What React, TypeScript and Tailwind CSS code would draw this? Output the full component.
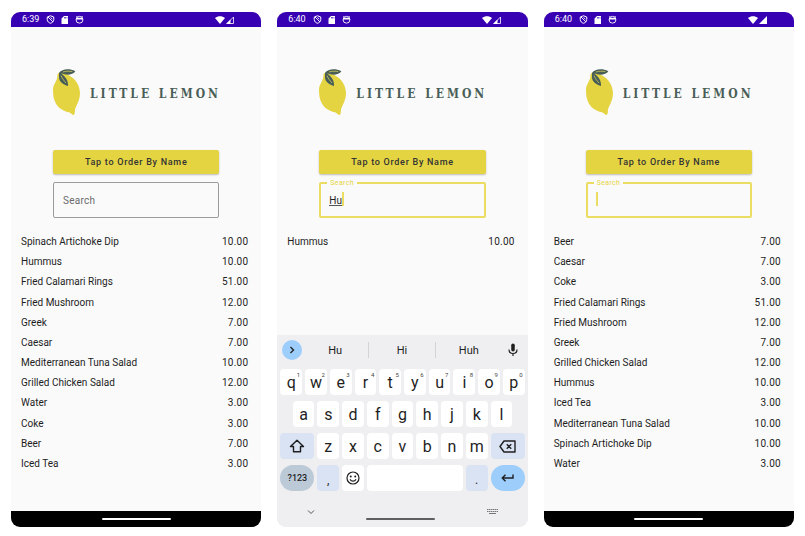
import { useId, type ReactNode } from "react";

type Dish = [name: string, price: string];

const MENU: Dish[] = [
  ["Spinach Artichoke Dip", "10.00"],
  ["Hummus", "10.00"],
  ["Fried Calamari Rings", "51.00"],
  ["Fried Mushroom", "12.00"],
  ["Greek", "7.00"],
  ["Caesar", "7.00"],
  ["Mediterranean Tuna Salad", "10.00"],
  ["Grilled Chicken Salad", "12.00"],
  ["Water", "3.00"],
  ["Coke", "3.00"],
  ["Beer", "7.00"],
  ["Iced Tea", "3.00"],
];

const SORTED = [...MENU].sort((a, b) => a[0].localeCompare(b[0]));

function StatusBar({ time, fullSignal }: { time: string; fullSignal?: boolean }) {
  return (
    <header className="flex h-[15px] shrink-0 items-center bg-[#3700b3] pr-[27px] pl-[11px] text-white">
      <span className="text-[9px] leading-[15px]">{time}</span>
      <svg className="ml-[7px] size-[9px]" viewBox="0 0 18 18" fill="none" stroke="currentColor" strokeWidth="2">
        <path d="M9 1.500 15.500 4v5c0 4-3 6.500-6.500 7.500C5.500 15.500 2.500 13 2.500 9V4z" />
        <path d="M4 4l10 10M9 4.500l3.500 4" strokeWidth="1.800" />
      </svg>
      <svg className="ml-[6px] size-[8px]" viewBox="0 0 16 16" fill="currentColor">
        <path fillRule="evenodd" d="M6 0h8v16H1V5zM6 2v3h1.300V2zm2.700 0v3H10V2zm2.600 0v3h1.300V2z" />
      </svg>
      <svg className="ml-[6px] size-[9px]" viewBox="0 0 18 18" fill="none" stroke="currentColor">
        <circle cx="9" cy="9.500" r="6.800" strokeWidth="1.800" />
        <path d="M2 5.500h14v3.500H2z" fill="currentColor" stroke="none" />
        <path d="M4.500 4 2.500 2M13.500 4l2-2" strokeWidth="1.500" />
      </svg>
      <svg className="ml-auto h-[8px] w-[10px]" viewBox="0 0 20 16" fill="currentColor">
        <path d="M10 16 0 4C6-1 14-1 20 4z" />
      </svg>
      <svg className="ml-px size-[8px]" viewBox="0 0 16 16" fill="currentColor">
        {fullSignal ? (
          <path d="M16 0v16H0z" />
        ) : (
          <>
            <path d="M15 2v13H2z" fill="none" stroke="currentColor" strokeWidth="1.600" />
            <path d="M9 7v9H0z" />
          </>
        )}
      </svg>
    </header>
  );
}

function Logo() {
  return (
    <div className="flex items-center gap-[10px]">
      <svg className="h-[46px] w-[27px] shrink-0" viewBox="0 0 81 138">
        <path
          d="M17 12C25 8 38 13 50 20C68 30 81 50 81 73C81 94 70 109 66 121C65 128 67 134 62 138C58 138 54 133 48 130C34 126 18 120 9 104C2 92 0 78 0 64C0 46 11 38 13 24C13 19 13 15 17 12Z"
          fill="#e5d442"
        />
        <path d="M18 12C27 0 48-3 67 7C61 18 38 20 25 13C28 19 47 27 45 51C32 47 16 39 18 21Z" fill="#495e57" />
        <path d="M30 9C40 6 49 6 58 8M24 20C28 29 34 36 39 42" fill="none" stroke="#cfc75a" strokeWidth="2.500" />
      </svg>
      <span className="pt-1 font-['DejaVu_Serif_Condensed','DejaVu_Serif',serif] text-[12px] leading-4 font-bold tracking-[3px] whitespace-nowrap text-[#495e57]">
        LITTLE LEMON
      </span>
    </div>
  );
}

function SearchField({ value, focused }: { value: string; focused?: boolean }) {
  const id = useId();
  if (!focused) {
    return (
      <div className="relative mt-2">
        <label htmlFor={id} className="absolute inset-y-0 left-[10px] flex items-center text-[10px] tracking-wide text-[#6b6b6b]">
          Search
        </label>
        <input
          id={id}
          type="text"
          className="block h-9 w-full rounded-[2px] border border-[#9b9b9b] bg-transparent px-[9px] text-[10px] text-[#1e1e1e] outline-none"
        />
      </div>
    );
  }
  return (
    <div className="relative mt-2">
      <label htmlFor={id} className="absolute -top-1 left-2 bg-[#fafafa] px-[3px] text-[7px] leading-[10px] tracking-wider text-[#e5d442]">
        Search
      </label>
      <input
        id={id}
        type="text"
        defaultValue={value}
        className="block h-9 w-full rounded-[2px] border-2 border-[#eadd62] bg-transparent px-2 text-[10px] text-[#1e1e1e] outline-none"
      />
      <span aria-hidden="true" className="pointer-events-none absolute top-[10px] left-[10px] flex h-[14px] items-stretch">
        <span className="border-b border-[#555555]">
          <span className="block h-[12px] text-[10px] text-transparent">{value}</span>
        </span>
        <span className="w-[2px] bg-[#eadd62]" />
      </span>
    </div>
  );
}

function Phone({
  time,
  dishes,
  query = "",
  focused,
  fullSignal,
  keyboard,
}: {
  time: string;
  dishes: Dish[];
  query?: string;
  focused?: boolean;
  fullSignal?: boolean;
  keyboard?: ReactNode;
}) {
  return (
    <section className="relative flex flex-col overflow-hidden rounded-[9px] bg-[#fafafa]">
      <StatusBar time={time} fullSignal={fullSignal} />
      <div className="px-[42px] pt-[42px]">
        <Logo />
        <button
          type="button"
          className="mt-[35px] block h-6 w-full rounded-[2px] bg-[#e5d442] pt-px text-[9px] font-medium tracking-[0.08em] text-[#333333] shadow-[0_1px_2px_rgba(0,0,0,0.25)]"
        >
          Tap to Order By Name
        </button>
        <SearchField value={query} focused={focused} />
      </div>
      <ul className="mt-[14px] grid flex-1 grid-rows-12 pr-[13px] pb-[37px] pl-[10px]">
        {dishes.map(([name, price]) => (
          <li key={name} className="flex items-center justify-between text-[10px] leading-5 text-[#1e1e1e]">
            <span>{name}</span>
            <span className="tracking-wide">{price}</span>
          </li>
        ))}
      </ul>
      <footer className={`flex h-4 shrink-0 items-center justify-center ${keyboard ? "bg-[#efeff1]" : "bg-black"}`}>
        {!keyboard && <span className="h-[2px] w-[69px] rounded-full bg-white" />}
      </footer>
      {keyboard}
    </section>
  );
}

const KEY = "relative flex h-[26px] items-center justify-center rounded-[4px] leading-none text-[#1f1f1f]";

function Letter({ char, hint, first }: { char: string; hint?: string; first?: boolean }) {
  return (
    <button type="button" className={`${KEY} bg-white pt-px text-[16px] ${first ? "col-start-2 col-end-4" : "col-span-2"}`}>
      {char}
      {hint && <span className="absolute top-[3px] right-[2px] text-[6px] leading-none text-[#444444]">{hint}</span>}
    </button>
  );
}

function Keyboard() {
  return (
    <div className="absolute inset-x-0 bottom-0 flex h-[192px] flex-col bg-[#efeff1] px-[3px] text-[#1f1f1f]">
      <div className="flex h-[30px] items-center pr-[7px] pl-[2px]">
        <button type="button" aria-label="More tools" className="flex size-5 items-center justify-center rounded-full bg-[#9dcdfb]">
          <svg className="size-[10px]" viewBox="0 0 20 20" fill="none" stroke="currentColor" strokeWidth="2.600">
            <path d="M7 4l6 6-6 6" />
          </svg>
        </button>
        <div className="mr-1.5 flex flex-1 divide-x divide-[#d3d3d6]">
          {["Hu", "Hi", "Huh"].map((word) => (
            <button key={word} type="button" className="h-4 flex-1 pt-px text-[11px] leading-[15px]">
              {word}
            </button>
          ))}
        </div>
        <svg className="h-[14px] w-[10px]" viewBox="0 0 20 28">
          <rect x="6.500" y="1" width="7" height="16" rx="3.500" fill="currentColor" />
          <path d="M2 13c0 5 3.500 8 8 8s8-3 8-8M10 21v5" fill="none" stroke="currentColor" strokeWidth="2.400" />
        </svg>
      </div>
      <div className="mt-1 grid grid-cols-20 gap-x-[3px] gap-y-[6px]">
        {[..."qwertyuiop"].map((c, i) => (
          <Letter key={c} char={c} hint={String((i + 1) % 10)} />
        ))}
        {[..."asdfghjkl"].map((c, i) => (
          <Letter key={c} char={c} first={i === 0} />
        ))}
        <button type="button" aria-label="Shift" className={`${KEY} col-span-3 col-start-1 bg-[#d9e3f4]`}>
          <svg className="h-[14px] w-[16px]" viewBox="0 0 32 28" fill="none" stroke="currentColor" strokeWidth="2.800" strokeLinejoin="round">
            <path d="M16 2.500 29 15h-6v10.500H9V15H3z" />
          </svg>
        </button>
        {[..."zxcvbnm"].map((c) => (
          <Letter key={c} char={c} />
        ))}
        <button type="button" aria-label="Backspace" className={`${KEY} col-span-3 bg-[#d9e3f4]`}>
          <svg className="h-[13px] w-[17px]" viewBox="0 0 34 26" fill="none" stroke="currentColor" strokeWidth="2.800" strokeLinejoin="round">
            <path d="M10 2h22v22H10L2 13zM15.500 8.500l9 9M24.500 8.500l-9 9" />
          </svg>
        </button>
        <button type="button" className="col-span-3 h-[26px] rounded-full bg-[#bccad8] pt-px text-[9px] font-medium">
          ?123
        </button>
        <button type="button" className={`${KEY} col-span-2 bg-[#d9e3f4] pt-1 text-[12px]`}>
          ,
        </button>
        <button type="button" aria-label="Emoji" className={`${KEY} col-span-2 bg-white`}>
          <svg className="size-[14px]" viewBox="0 0 28 28" fill="none" stroke="currentColor" strokeWidth="2.400">
            <circle cx="14" cy="14" r="12" />
            <circle cx="9.500" cy="11" r="2" fill="currentColor" stroke="none" />
            <circle cx="18.500" cy="11" r="2" fill="currentColor" stroke="none" />
            <path d="M8 16.500c2.500 5 9.500 5 12 0" />
          </svg>
        </button>
        <button type="button" aria-label="Space" className={`${KEY} col-span-8 bg-white`} />
        <button type="button" className={`${KEY} col-span-2 bg-[#d9e3f4] pt-1 text-[12px]`}>
          .
        </button>
        <button type="button" aria-label="Enter" className="col-span-3 flex h-[26px] items-center justify-center rounded-full bg-[#9dcdfb]">
          <svg className="h-[10px] w-[13px]" viewBox="0 0 26 20" fill="none" stroke="currentColor" strokeWidth="2.800">
            <path d="M24 3v7H3M9 3.500 2.500 10 9 16.500" />
          </svg>
        </button>
      </div>
      <div className="mt-auto flex h-[22px] items-start justify-between px-[27px]">
        <svg className="mt-1 h-[6px] w-[8px]" viewBox="0 0 16 12" fill="none" stroke="#555555" strokeWidth="2">
          <path d="M2 3l6 6 6-6" />
        </svg>
        <span className="mt-[13px] h-[2px] w-[69px] rounded-full bg-[#5f5f61]" />
        <svg className="mt-[3px] h-[6px] w-[11px]" viewBox="0 0 11 6" fill="none" stroke="#777777">
          <path d="M0 1.500h11M0 3.500h11" strokeDasharray="1.500 0.500" />
          <path d="M2 5.500h7" />
        </svg>
      </div>
    </div>
  );
}

export default function App() {
  return (
    <main className="grid min-h-screen grid-cols-3 gap-4 bg-white px-[11px] pt-3 pb-[9px] font-[Roboto,sans-serif]">
      <Phone time="6:39" dishes={MENU} />
      <Phone time="6:40" dishes={MENU.filter(([name]) => name.startsWith("Hu"))} query="Hu" focused keyboard={<Keyboard />} />
      <Phone time="6:40" dishes={SORTED} focused fullSignal />
    </main>
  );
}
